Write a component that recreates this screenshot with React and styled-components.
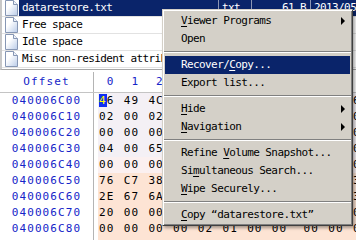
import React from 'react';
import styled, { createGlobalStyle } from 'styled-components';

const GlobalStyle = createGlobalStyle`
  html, body {
    margin: 0;
    padding: 0;
    background: #fff;
  }
  * {
    box-sizing: border-box;
  }
`;

const Screen = styled.div`
  position: relative;
  width: 356px;
  height: 240px;
  overflow: hidden;
  background: #fff;
  font-family: "DejaVu Sans Mono", "Liberation Mono", monospace;
`;

/* ---------- file list ---------- */

const FileList = styled.div`
  height: 70px;
  border-left: 2px solid #c8c8c8;
  border-bottom: 1px solid #a8a8a8;
`;

const ListRow = styled.div`
  display: flex;
  height: 17px;
  border-bottom: 1px solid #e2e2e2;
  font-size: 11px;
  letter-spacing: -0.6px;
  line-height: 16px;
  color: #000;
`;

const IconCell = styled.div`
  width: 17px;
  flex: none;
  display: flex;
  align-items: center;
  justify-content: center;
  padding-left: 1px;
`;

const Cells = styled.div`
  flex: 1;
  display: flex;
  background: ${p => (p.$selected ? '#0a246a' : 'transparent')};
  color: ${p => (p.$selected ? '#fff' : '#000')};
  border-top: ${p => (p.$selected ? '1px dotted #9aa6c8' : 'none')};
  margin-top: ${p => (p.$selected ? '-1px' : '0')};
`;

const Cell = styled.div`
  width: ${p => p.$w}px;
  flex: ${p => (p.$w ? 'none' : '1')};
  padding: 0 ${p => (p.$right ? '4px' : '3px')};
  text-align: ${p => (p.$right ? 'right' : 'left')};
  white-space: nowrap;
  overflow: hidden;
  border-right: ${p => (p.$line ? '1px solid #8c96b4' : 'none')};
`;

/* ---------- hex view ---------- */

const HexView = styled.div`
  font-size: 11px;
  letter-spacing: 1.1px;
  line-height: 16px;
`;

const HexHeader = styled.div`
  display: flex;
  height: 23px;
  border-bottom: 1px solid #c4c4c4;
  align-items: center;
  padding-top: 2px;
`;

const HexRow = styled.div`
  display: flex;
  height: 16px;
`;

const OffsetCell = styled.div`
  width: 94px;
  flex: none;
  text-align: center;
  color: #1424c8;
  border-right: 1px solid #b4b4b4;
  align-self: stretch;
  display: flex;
  align-items: center;
  justify-content: center;
`;

const Bytes = styled.div`
  display: flex;
  flex: 1;
  margin-left: 4px;
  padding-left: 1px;
  background: ${p => p.$bg || 'transparent'};
  color: ${p => (p.$head ? '#1424c8' : '#000')};
`;

const Byte = styled.span`
  width: 24.7px;
  flex: none;
  white-space: pre;
  margin-right: ${p => (p.$groupEnd ? '7px' : '0')};
`;

const Cursor = styled.span`
  background: #0f2ef2;
  color: #ffff00;
`;

/* ---------- context menu ---------- */

const Menu = styled.div`
  position: absolute;
  left: 162px;
  top: 9px;
  width: 191px;
  padding: 2px 2px 1px;
  background: #d4d0c8;
  border: 1px solid;
  border-color: #d4d0c8 #404040 #404040 #d4d0c8;
  box-shadow: inset 1px 1px 0 #fff, inset -1px -1px 0 #808080,
    2px 2px 3px rgba(0, 0, 0, 0.35);
  font-size: 11px;
  letter-spacing: -0.6px;
`;

const Item = styled.div`
  position: relative;
  height: 18px;
  line-height: 18px;
  padding-left: 16px;
  white-space: pre;
  color: ${p => (p.$active ? '#fff' : '#000')};
  background: ${p => (p.$active ? '#0a246a' : 'transparent')};
`;

const Key = styled.span`
  text-decoration: underline;
  text-underline-offset: 2px;
`;

const Arrow = styled.span`
  position: absolute;
  right: 5px;
  top: 5px;
  width: 0;
  height: 0;
  border-left: 4px solid currentColor;
  border-top: 4px solid transparent;
  border-bottom: 4px solid transparent;
`;

const Separator = styled.div`
  position: relative;
  height: 8px;
  margin: 0 -1px;
  &::after {
    content: '';
    position: absolute;
    left: 0;
    right: 0;
    top: 3px;
    height: 1px;
    background: #808080;
    box-shadow: 0 1px 0 #fff;
  }
`;

function PageIcon() {
  return (
    <svg width="13" height="16" viewBox="0 0 13 16">
      <defs>
        <linearGradient id="pg" x1="0" y1="0" x2="1" y2="1">
          <stop offset="0.35" stopColor="#ffffff" />
          <stop offset="1" stopColor="#b9cbe8" />
        </linearGradient>
      </defs>
      <path d="M0.5 0.5 H8.5 L12.5 4.5 V15.5 H0.5 Z" fill="url(#pg)" stroke="#8797b4" />
      <path d="M8.5 0.5 V4.5 H12.5" fill="#eef2fa" stroke="#8797b4" />
    </svg>
  );
}

const files = [
  { name: 'datarestore.txt', type: 'txt', size: '61 B', date: '2013/05/16 10:22', selected: true },
  { name: 'Free space', type: '', size: '', date: '' },
  { name: 'Idle space', type: '', size: '', date: '' },
  { name: 'Misc non-resident attributes', type: '', size: '', date: '' },
];

const lavender = '#f4f0f5';
const rows = [
  ['040006C00', '46 49 4C 45 30 00 03 00 9A 62 60 04 00 00 00 00', lavender],
  ['040006C10', '02 00 02 00 38 00 01 00 B0 01 00 00 00 04 00 00', lavender],
  ['040006C20', '00 00 00 00 00 00 00 00 05 00 00 00 1B 00 00 00', lavender],
  ['040006C30', '04 00 65 00 00 00 00 00 10 00 00 00 60 00 00 00', lavender],
  ['040006C40', '00 00 00 00 00 00 00 00 48 00 00 00 18 00 00 00', '#fbf0f0'],
  ['040006C50', '76 C7 38 5C 2A 3F CE 01 76 C7 38 5C 2A 3F CE 01', '#fde4d4'],
  ['040006C60', '2E 67 6A 5C 2A 3F CE 01 76 C7 38 5C 2A 3F CE 01', '#fde4d4'],
  ['040006C70', '20 00 00 00 00 00 00 00 00 00 00 00 00 00 00 00', '#fde4d4'],
  ['040006C80', '00 00 00 00 02 01 00 00 00 00 00 00 00 00 00 00', '#fde4d4'],
  ['040006C90', '00 00 00 00 00 00 00 00 00 00 00 00 00 00 00 00', '#fde4d4'],
];

const menuItems = [
  { label: 'Viewer Programs', key: 0, sub: true },
  { label: 'Open' },
  { sep: true },
  { label: 'Recover/Copy...', key: 8, active: true },
  { label: 'Export list...' },
  { sep: true },
  { label: 'Hide', key: 0, sub: true },
  { label: 'Navigation', key: 0, sub: true },
  { sep: true },
  { label: 'Refine Volume Snapshot...', key: 7 },
  { label: 'Simultaneous Search...', key: 2 },
  { label: 'Wipe Securely...', key: 0 },
  { sep: true },
  { label: 'Copy \u201Cdatarestore.txt\u201D', key: 0 },
];

function Label({ text, k }) {
  if (k === undefined) return text;
  return (
    <>
      {text.slice(0, k)}
      <Key>{text[k]}</Key>
      {text.slice(k + 1)}
    </>
  );
}

function App() {
  return (
    <Screen>
      <GlobalStyle />
      <FileList>
        {files.map((f, i) => (
          <ListRow key={i}>
            <IconCell>
              <PageIcon />
            </IconCell>
            <Cells $selected={f.selected}>
              <Cell $w={200} $line={f.selected}>{f.name}</Cell>
              <Cell $w={33} $line={f.selected}>{f.type}</Cell>
              <Cell $w={59} $right $line={f.selected}>{f.size}</Cell>
              <Cell>{f.date}</Cell>
            </Cells>
          </ListRow>
        ))}
      </FileList>

      <HexView>
        <HexHeader>
          <OffsetCell>Offset</OffsetCell>
          <Bytes $head>
            {'0123456789ABCDEF'.split('').map((d, i) => (
              <Byte key={d} $groupEnd={i === 7}>{' ' + d}</Byte>
            ))}
          </Bytes>
        </HexHeader>
        {rows.map(([offset, data, bg], r) => (
          <HexRow key={offset}>
            <OffsetCell>{offset}</OffsetCell>
            <Bytes $bg={bg}>
              {data.split(' ').map((b, i) => (
                <Byte key={i} $groupEnd={i === 7}>
                  {r === 0 && i === 0 ? (
                    <>
                      <Cursor>{b[0]}</Cursor>
                      {b[1]}
                    </>
                  ) : (
                    b
                  )}
                </Byte>
              ))}
            </Bytes>
          </HexRow>
        ))}
      </HexView>

      <Menu>
        {menuItems.map((m, i) =>
          m.sep ? (
            <Separator key={i} />
          ) : (
            <Item key={i} $active={m.active}>
              <Label text={m.label} k={m.key} />
              {m.sub && <Arrow />}
            </Item>
          )
        )}
      </Menu>
    </Screen>
  );
}

export default App;
